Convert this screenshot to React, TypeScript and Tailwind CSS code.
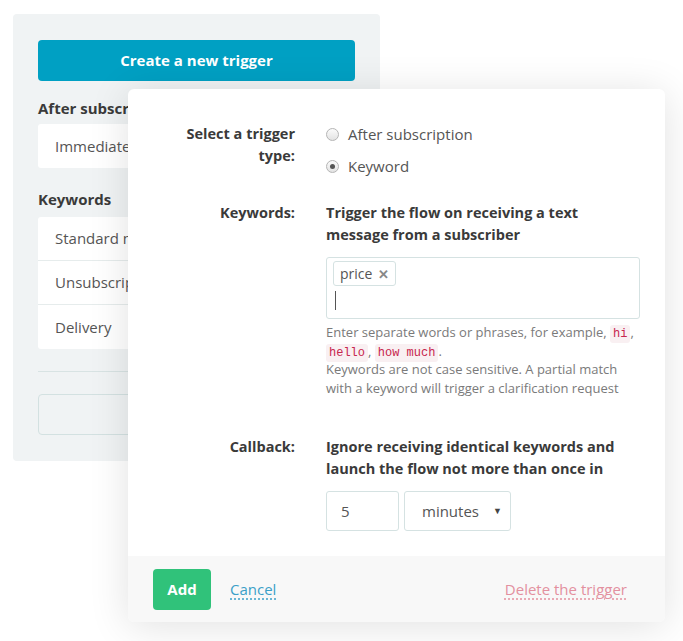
import React from 'react';

const rows = ['Standard messages', 'Unsubscription', 'Delivery'];

function Radio({ checked, label }: { checked?: boolean; label: string }) {
  return (
    <label className="flex items-center h-[22px] text-[15px] text-[#555]">
      <span className="w-[13px] h-[13px] rounded-full border border-[#b5b5b5] bg-gradient-to-b from-[#fbfbfb] to-[#e3e3e3] flex items-center justify-center mr-[9px]">
        {checked && <span className="w-[5px] h-[5px] rounded-full bg-[#555]" />}
      </span>
      {label}
    </label>
  );
}

function Code({ children }: { children: React.ReactNode }) {
  return (
    <code className="font-['Liberation_Mono',monospace] text-[12px] leading-[12px] text-[#c7254e] bg-[#f9f0f2] rounded-[3px] px-[3px] py-[2px]">
      {children}
    </code>
  );
}

export default function App() {
  return (
    <div className="relative w-[683px] h-[641px] bg-white overflow-hidden font-['Open_Sans',sans-serif] text-[#3a3a3a]">
      {/* background panel */}
      <div className="ml-[13px] mt-[14px] w-[367px] h-[447px] bg-[#f0f3f4] rounded-[4px] px-[25px] pt-[26px]">
        <button className="w-full h-[41px] rounded-[4px] bg-[#00a0c3] text-white font-bold text-[15px]">
          Create a new trigger
        </button>
        <div className="mt-[16px] font-bold text-[15px] leading-[22px]">After subscription</div>
        <div className="mt-[5px] h-[44px] bg-white rounded-[3px] px-[17px] flex items-center text-[15px] text-[#555]">
          Immediately after subscription
        </div>
        <div className="mt-[20px] font-bold text-[15px] leading-[22px]">Keywords</div>
        <div className="mt-[7px] bg-white rounded-[3px] divide-y divide-[#e6ecec]">
          {rows.map((r) => (
            <div key={r} className="h-[44px] px-[17px] flex items-center text-[15px] text-[#555]">
              {r}
            </div>
          ))}
        </div>
        <div className="mt-[22px] border-t border-[#d8e3e3]" />
        <div className="mt-[22px] h-[41px] rounded-[4px] border border-[#d3e1e1]" />
      </div>

      {/* modal */}
      <div className="absolute left-[128px] top-[89px] w-[537px] h-[533px] bg-white rounded-[6px] shadow-[0_4px_40px_rgba(0,0,0,0.12)] flex flex-col overflow-hidden">
        <div className="flex-1 pt-[34px] pr-[25px] grid grid-cols-[167px_1fr] gap-x-[31px] content-start text-[14.5px] leading-[22px]">
          <div className="font-bold text-right">
            Select a trigger
            <br />
            type:
          </div>
          <div className="flex flex-col gap-[10px]">
            <Radio label="After subscription" />
            <Radio checked label="Keyword" />
          </div>

          <div className="font-bold text-right mt-[25px]">Keywords:</div>
          <div className="mt-[25px]">
            <div className="font-bold">
              Trigger the flow on receiving a text
              <br />
              message from a subscriber
            </div>
            <div className="mt-[11px] h-[62px] border border-[#d5e2e2] rounded-[3px] px-[6px] pt-[3px]">
              <span className="inline-flex items-center h-[25px] border border-[#d5e2e2] rounded-[3px] px-[6px] text-[14px] text-[#555]">
                price
                <span className="ml-[6px] text-[#888] font-bold text-[13px]">✕</span>
              </span>
              <div className="mt-[5px] ml-[2px] w-[1px] h-[19px] bg-[#555]" />
            </div>
            <div className="mt-[4px] text-[13px] leading-[18.7px] text-[#7a7a7a]">
              Enter separate words or phrases, for example, <Code>hi</Code>,
              <br />
              <Code>hello</Code>, <Code>how much</Code>.
              <br />
              Keywords are not case sensitive. A partial match
              <br />
              with a keyword will trigger a clarification request
            </div>
          </div>

          <div className="font-bold text-right mt-[38px]">Callback:</div>
          <div className="mt-[38px]">
            <div className="font-bold">
              Ignore receiving identical keywords and
              <br />
              launch the flow not more than once in
            </div>
            <div className="mt-[11px] flex gap-[5px]">
              <div className="w-[73px] h-[40px] border border-[#d5e2e2] rounded-[3px] px-[14px] flex items-center text-[15px] text-[#555]">
                5
              </div>
              <div className="w-[107px] h-[40px] border border-[#d5e2e2] rounded-[3px] pl-[17px] pr-[8px] flex items-center justify-between text-[15px] text-[#555]">
                minutes
                <span className="text-[9px] text-[#444]">▼</span>
              </div>
            </div>
          </div>
        </div>

        <div className="h-[66px] bg-[#f8f8f8] flex items-center pl-[25px] pr-[38px] text-[15px]">
          <button className="w-[58px] h-[41px] rounded-[4px] bg-[#30c27a] text-white font-bold text-[15px]">
            Add
          </button>
          <a className="ml-[19px] text-[#3ba0c8] underline decoration-dotted underline-offset-[4px]">Cancel</a>
          <a className="ml-auto text-[#e3909f] underline decoration-dotted underline-offset-[4px]">Delete the trigger</a>
        </div>
      </div>
    </div>
  );
}
